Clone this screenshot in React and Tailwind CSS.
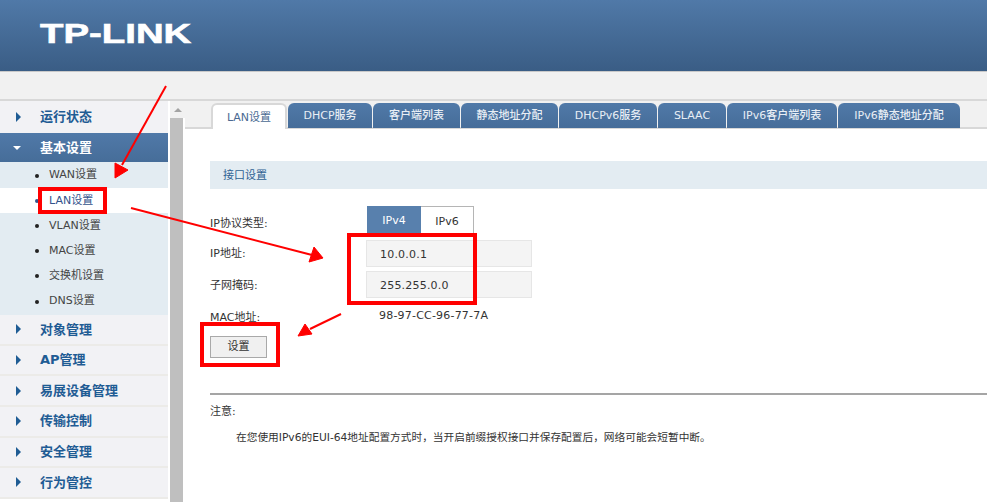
const font = "font-['DejaVu_Sans','Noto_Sans_CJK_SC',sans-serif]"

const topMenu = ['对象管理', 'AP管理', '易展设备管理', '传输控制', '安全管理', '行为管控']
const subMenu = ['WAN设置', 'LAN设置', 'VLAN设置', 'MAC设置', '交换机设置', 'DNS设置']
const tabs = [
  ['DHCP服务', 'w-[84px]'],
  ['客户端列表', 'w-[87px]'],
  ['静态地址分配', 'w-[97px]'],
  ['DHCPv6服务', 'w-[98px]'],
  ['SLAAC', 'w-[68px]'],
  ['IPv6客户端列表', 'w-[110px]'],
  ['IPv6静态地址分配', 'w-[122px]'],
]

function Arrow({ down }) {
  if (down) return <span className="ml-[13px] w-0 h-0 border-x-[4px] border-x-transparent border-t-[4px] border-t-white"></span>
  return <span className="ml-4 w-0 h-0 border-y-[5px] border-y-transparent border-l-[5px] border-l-[#1f5c94]"></span>
}

function MenuRow({ label }) {
  return (
    <div className="h-[30.6px] flex items-center bg-[#f2f2f5] border-b-2 border-[#ecebe8]">
      <Arrow />
      <span className="ml-[19px] text-[13px] font-bold text-[#1f5c94]">{label}</span>
    </div>
  )
}

function FormRow({ label, labelClass, children, className }) {
  return (
    <div className={`flex items-center ${className}`}>
      <span className={`w-[157px] text-[11px] text-[#333] ${labelClass}`}>{label}</span>
      {children}
    </div>
  )
}

function ValueBox({ value }) {
  return (
    <div className="-ml-px w-[166px] h-[27px] flex items-center pl-[13px] pt-[3px] bg-[#f4f4f4] border border-[#e6e6e6] text-[11px] text-[#333] tracking-[0.2px]">
      {value}
    </div>
  )
}

function Annotations() {
  return (
    <>
      <svg className="absolute left-0 top-0 pointer-events-none" width="987" height="502" viewBox="0 0 987 502">
        <g fill="#ff0000" stroke="#ff0000">
          <line x1="166" y1="86" x2="122" y2="165" strokeWidth="2" />
          <polygon points="115,178 115,163 128,170" />
          <line x1="131" y1="208" x2="312" y2="255" strokeWidth="2" />
          <polygon points="323,258 309,262 314,247" />
          <line x1="341" y1="314" x2="310" y2="329" strokeWidth="2" />
          <polygon points="298,336 305,324 312,334" />
        </g>
      </svg>
      <div className="absolute left-[38px] top-[187px] w-[69px] h-[27px] border-[4px] border-[#ff0000]"></div>
      <div className="absolute left-[347px] top-[233px] w-[130px] h-[72px] border-[4px] border-[#ff0000]"></div>
      <div className="absolute left-[200px] top-[322px] w-[80px] h-[45px] border-[4px] border-[#ff0000]"></div>
    </>
  )
}

export default function App() {
  return (
    <div className={`relative w-[987px] h-[502px] overflow-hidden bg-white ${font}`}>
      <div className="h-[72px] pl-10 pt-[16px] bg-gradient-to-b from-[#5079a8] to-[#3a5d85] border-b border-[#c9c9c9]">
        <div className="origin-left scale-x-[1.37] font-['Liberation_Sans'] font-bold text-[28px] leading-9 text-white [-webkit-text-stroke:0.6px_white]">TP-LINK</div>
      </div>
      <div className="h-[29px] bg-[#f1f1f1] border-b-2 border-[#d8d8d8]"></div>

      <div className="flex h-[401px]">
        <div className="w-[168px] shrink-0">
          <div className="h-[32px] flex items-center bg-[#f2f2f5]">
            <Arrow />
            <span className="ml-[19px] text-[13px] font-bold text-[#1f5c94]">运行状态</span>
          </div>
          <div className="h-[29px] flex items-center bg-gradient-to-b from-[#5079a8] to-[#466d99]">
            <Arrow down />
            <span className="ml-[19px] text-[13px] font-bold text-white">基本设置</span>
          </div>
          <div className="bg-[#e3ecf2] pt-px pb-px">
            {subMenu.map((item, i) => (
              <div key={item} className={`h-[25.2px] flex items-center pl-[35px] text-[11px] ${i === 1 ? 'bg-white text-[#33538c]' : 'text-[#444]'}`}>
                <span className={`w-1 h-1 rounded-full mr-[10px] ${i === 1 ? 'bg-[#33538c]' : 'bg-[#222]'}`}></span>
                {item}
              </div>
            ))}
          </div>
          {topMenu.map((item) => <MenuRow key={item} label={item} />)}
        </div>

        <div className="w-[15px] ml-[2px] shrink-0 flex flex-col items-center">
          <div className="h-[17px] w-full bg-[#f1f1f1] flex justify-center pt-[7px]">
            <span className="w-0 h-0 border-x-[4px] border-x-transparent border-b-[4px] border-b-[#a3a3a3]"></span>
          </div>
          <div className="flex-1 w-[13px] self-start bg-[#bfbfbf]"></div>
        </div>

        <div className="flex-1 min-w-0">
          <div className="h-[28px] bg-[#f1f1f1] border-b-2 border-[#d8d8d8] pl-[26px] flex items-end">
            <div className="w-[76px] h-[26px] -mb-[2px] flex items-center justify-center pt-[2px] bg-white border-x-2 border-t-2 border-[#d8d8d8] rounded-t-md text-[11px] text-[#4a6a92]">LAN设置</div>
            {tabs.map(([label, width]) => (
              <div key={label} className={`${width} h-[25px] -mb-[1px] ml-px flex items-center justify-center pt-[2px] bg-gradient-to-b from-[#5079a8] to-[#466d99] rounded-t-md text-[11px] font-medium text-[#e8eef5]`}>
                {label}
              </div>
            ))}
          </div>

          <div className="pl-[25px] pt-[32px]">
            <div className="h-[28px] flex items-center pl-[13px] pt-[2px] bg-[#e3ecf2] text-[11px] text-[#2f6193]">接口设置</div>

            <FormRow label="IP协议类型:" labelClass="pt-[9px]" className="mt-[17px]">
              <div className="flex h-[28px] w-[107px] border-t border-r border-[#b5b5b5] text-[11px]">
                <div className="w-[54px] -mt-px flex items-center justify-center pt-[3px] bg-[#5880ad] text-white">IPv4</div>
                <div className="flex-1 flex items-center justify-center pt-[3px] text-[#333]">IPv6</div>
              </div>
            </FormRow>
            <FormRow label="IP地址:" labelClass="pt-px" className="mt-[6px]">
              <ValueBox value="10.0.0.1" />
            </FormRow>
            <FormRow label="子网掩码:" labelClass="pt-[3px]" className="mt-[4px]">
              <ValueBox value="255.255.0.0" />
            </FormRow>
            <FormRow label="MAC地址:" labelClass="pt-[3px]" className="mt-[5px] h-[27px]">
              <span className="pl-3 text-[11px] text-[#333] tracking-[0.2px]">98-97-CC-96-77-7A</span>
            </FormRow>

            <button className="block mt-[6px] w-[57px] h-[22px] bg-[#f0f0f0] border border-[#a9a9a9] text-[11px] text-[#333]">设置</button>

            <div className="mt-[35px] h-[2px] bg-[#a5a5a5]"></div>
            <div className="mt-[9px] text-[11px] text-[#333] leading-[16px]">注意:</div>
            <div className="mt-[10px] pl-[26px] text-[10.7px] text-[#333] leading-[16px] whitespace-nowrap">
              在您使用IPv6的EUI-64地址配置方式时，当开启前缀授权接口并保存配置后，网络可能会短暂中断。
            </div>
          </div>
        </div>
      </div>

      <Annotations />
    </div>
  )
}
